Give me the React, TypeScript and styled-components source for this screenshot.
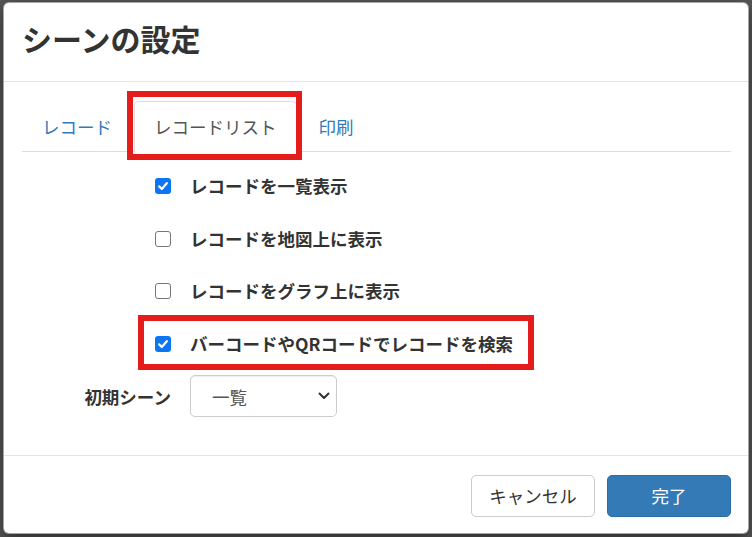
import styled, { createGlobalStyle } from 'styled-components';

const GlobalStyle = createGlobalStyle`
    html, body {
        margin: 0;
        padding: 0;
        background: #575757;
    }
    body {
        font-family: "Noto Sans CJK JP", "Noto Sans", "Liberation Sans", sans-serif;
        color: #333;
    }
    * {
        box-sizing: border-box;
    }
`;

type SceneOption = { label: string; checked: boolean };

const options: SceneOption[] = [
    { label: 'レコードを一覧表示', checked: true },
    { label: 'レコードを地図上に表示', checked: false },
    { label: 'レコードをグラフ上に表示', checked: false },
    { label: 'バーコードやQRコードでレコードを検索', checked: true },
];

const tabs = ['レコード', 'レコードリスト', '印刷'];

const CheckBox = ({ checked }: { checked: boolean }) => (
    <Box $checked={checked}>
        {checked && (
            <svg width="12" height="12" viewBox="0 0 12 12">
                <path
                    d="M2.2 6.4 L4.8 9 L9.8 3.2"
                    fill="none"
                    stroke="#fff"
                    strokeWidth="2.2"
                    strokeLinecap="round"
                    strokeLinejoin="round"
                />
            </svg>
        )}
    </Box>
);

export default function App() {
    return (
        <Backdrop>
            <GlobalStyle />
            <Modal>
                <Header>
                    <Title>シーンの設定</Title>
                </Header>
                <Body>
                    <Tabs>
                        {tabs.map((t) => (
                            <Tab key={t} $active={t === 'レコードリスト'}>
                                {t}
                            </Tab>
                        ))}
                    </Tabs>
                    <TabContent>
                        {options.map((o) => (
                            <CheckRow key={o.label}>
                                <CheckBox checked={o.checked} />
                                <CheckLabel>{o.label}</CheckLabel>
                            </CheckRow>
                        ))}
                        <FieldRow>
                            <FieldLabel>初期シーン</FieldLabel>
                            <SelectWrap>
                                <Select defaultValue="list">
                                    <option value="list">一覧</option>
                                    <option value="map">地図</option>
                                    <option value="graph">グラフ</option>
                                </Select>
                                <Chevron width="12" height="8" viewBox="0 0 12 8">
                                    <path
                                        d="M1.5 1.5 L6 6 L10.5 1.5"
                                        fill="none"
                                        stroke="#333"
                                        strokeWidth="2"
                                        strokeLinecap="round"
                                        strokeLinejoin="round"
                                    />
                                </Chevron>
                            </SelectWrap>
                        </FieldRow>
                    </TabContent>
                </Body>
                <Footer>
                    <Button>キャンセル</Button>
                    <Button $primary>完了</Button>
                </Footer>
                <Highlight style={{ left: 123, top: 88, width: 175, height: 69 }} />
                <Highlight style={{ left: 134, top: 312, width: 396, height: 55 }} />
            </Modal>
        </Backdrop>
    );
}

const Backdrop = styled.div`
    width: 752px;
    height: 537px;
    padding: 2px 3px 0 3px;
    overflow: hidden;
`;

const Modal = styled.div`
    position: relative;
    width: 746px;
    background: #fff;
    border: 1px solid rgba(0, 0, 0, 0.35);
    border-radius: 6px;
    box-shadow: 0 5px 15px rgba(0, 0, 0, 0.5);
    display: flex;
    flex-direction: column;
`;

const Header = styled.div`
    height: 79px;
    padding: 17px 18px 0;
    border-bottom: 1px solid #e5e5e5;
`;

const Title = styled.h3`
    margin: 0;
    font-size: 30px;
    line-height: 36px;
    font-weight: 700;
    color: #333;
`;

const Body = styled.div`
    padding: 19px 17px 19px 18px;
`;

const Tabs = styled.div`
    display: flex;
    border-bottom: 1px solid #ddd;
    height: 51px;
`;

const Tab = styled.div<{ $active?: boolean }>`
    height: 51px;
    padding: 0 19px;
    margin-right: 2px;
    font-size: 17.5px;
    line-height: 49px;
    border: 1px solid ${(p) => (p.$active ? '#ddd' : 'transparent')};
    border-bottom-color: ${(p) => (p.$active ? '#fff' : 'transparent')};
    border-radius: 5px 5px 0 0;
    background: ${(p) => (p.$active ? '#fff' : 'transparent')};
    color: ${(p) => (p.$active ? '#555' : '#337ab7')};
    white-space: nowrap;
`;

const TabContent = styled.div`
    padding-top: 13px;
`;

const CheckRow = styled.div`
    display: flex;
    align-items: center;
    height: 34px;
    padding: 8px 0 0 133px;
    margin-bottom: 18.5px;
`;

const Box = styled.span<{ $checked: boolean }>`
    width: 16px;
    height: 16px;
    flex: none;
    border-radius: 3px;
    display: flex;
    align-items: center;
    justify-content: center;
    background: ${(p) => (p.$checked ? '#0b75f4' : '#fff')};
    border: ${(p) => (p.$checked ? 'none' : '1px solid #767676')};
`;

const CheckLabel = styled.span`
    margin-left: 19px;
    font-size: 17.5px;
    line-height: 26px;
    font-weight: 700;
    color: #333;
    white-space: nowrap;
`;

const FieldRow = styled.div`
    display: flex;
    align-items: center;
    margin-bottom: 18.5px;
`;

const FieldLabel = styled.label`
    width: 168px;
    padding-right: 19px;
    text-align: right;
    font-size: 17.5px;
    font-weight: 700;
    color: #333;
    white-space: nowrap;
`;

const SelectWrap = styled.div`
    position: relative;
    width: 147px;
    height: 42px;
`;

const Select = styled.select`
    appearance: none;
    width: 100%;
    height: 100%;
    padding: 0 0 0 21px;
    border: 1px solid #ccc;
    border-radius: 5px;
    background: #fff;
    font-family: inherit;
    font-size: 17.5px;
    color: #555;
    box-shadow: inset 0 1px 1px rgba(0, 0, 0, 0.075);
`;

const Chevron = styled.svg`
    position: absolute;
    right: 7px;
    top: 17px;
    pointer-events: none;
`;

const Footer = styled.div`
    display: flex;
    justify-content: flex-end;
    gap: 12px;
    padding: 19px 17px 16px 18px;
    border-top: 1px solid #e5e5e5;
`;

const Button = styled.button<{ $primary?: boolean }>`
    min-width: 124px;
    height: 42px;
    padding: 0 16px;
    font-family: inherit;
    font-size: 17.5px;
    border-radius: 5px;
    border: 1px solid ${(p) => (p.$primary ? '#2e6da4' : '#ccc')};
    background: ${(p) => (p.$primary ? '#337ab7' : '#fff')};
    color: ${(p) => (p.$primary ? '#fff' : '#333')};
`;

const Highlight = styled.div`
    position: absolute;
    border: 6px solid #e41c1c;
    pointer-events: none;
`;
